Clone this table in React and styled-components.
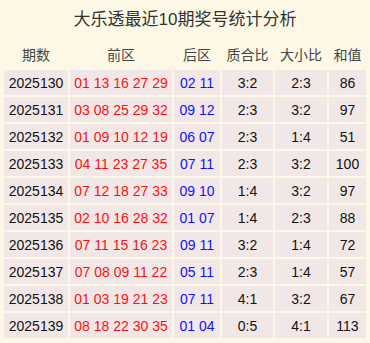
import React from 'react';
import styled, { createGlobalStyle } from 'styled-components';

const GlobalStyle = createGlobalStyle`
  html, body {
    margin: 0;
    padding: 0;
    background: #fdf8e5;
  }
  body {
    font-family: "Liberation Sans", "Noto Sans CJK SC", sans-serif;
  }
`;

// data
const rows = [
  ['2025130', '01 13 16 27 29', '02 11', '3:2', '2:3', '86'],
  ['2025131', '03 08 25 29 32', '09 12', '2:3', '3:2', '97'],
  ['2025132', '01 09 10 12 19', '06 07', '2:3', '1:4', '51'],
  ['2025133', '04 11 23 27 35', '07 11', '2:3', '3:2', '100'],
  ['2025134', '07 12 18 27 33', '09 10', '1:4', '3:2', '97'],
  ['2025135', '02 10 16 28 32', '01 07', '1:4', '2:3', '88'],
  ['2025136', '07 11 15 16 23', '09 11', '3:2', '1:4', '72'],
  ['2025137', '07 08 09 11 22', '05 11', '2:3', '1:4', '57'],
  ['2025138', '01 03 19 21 23', '07 11', '4:1', '3:2', '67'],
  ['2025139', '08 18 22 30 35', '01 04', '0:5', '4:1', '113'],
];

const heads = ['期数', '前区', '后区', '质合比', '大小比', '和值'];

// styled
const Page = styled.div`
  width: 370px;
  padding: 0 4px;
  box-sizing: border-box;
`;
const Title = styled.div`
  height: 39px;
  line-height: 39px;
  text-align: center;
  font-size: 17px;
  color: #333;
`;
const Grid = styled.div`
  display: grid;
  grid-template-columns: 64px 102px 46px 51px 52px 37px;
  grid-template-rows: 29px;
  grid-auto-rows: 25px;
  gap: 2px;
`;
const HeadCell = styled.div`
  display: flex;
  align-items: center;
  justify-content: center;
  font-size: 14px;
  color: #444;
`;
const Cell = styled.div`
  display: flex;
  align-items: center;
  justify-content: center;
  background: #f2e7e7;
  font-size: 14px;
  white-space: pre;
  color: ${p => p.tone === 'red' ? '#ff1010' : p.tone === 'blue' ? '#1010ff' : '#111'};
`;

const tones = ['', 'red', 'blue', '', '', ''];

const App = () => (
  <Page>
    <GlobalStyle />
    <Title>大乐透最近10期奖号统计分析</Title>
    <Grid>
      {heads.map(h => <HeadCell key={h}>{h}</HeadCell>)}
      {rows.map(r => r.map((v, i) => (
        <Cell key={r[0] + i} tone={tones[i]}>{v}</Cell>
      )))}
    </Grid>
  </Page>
);

export default App;
